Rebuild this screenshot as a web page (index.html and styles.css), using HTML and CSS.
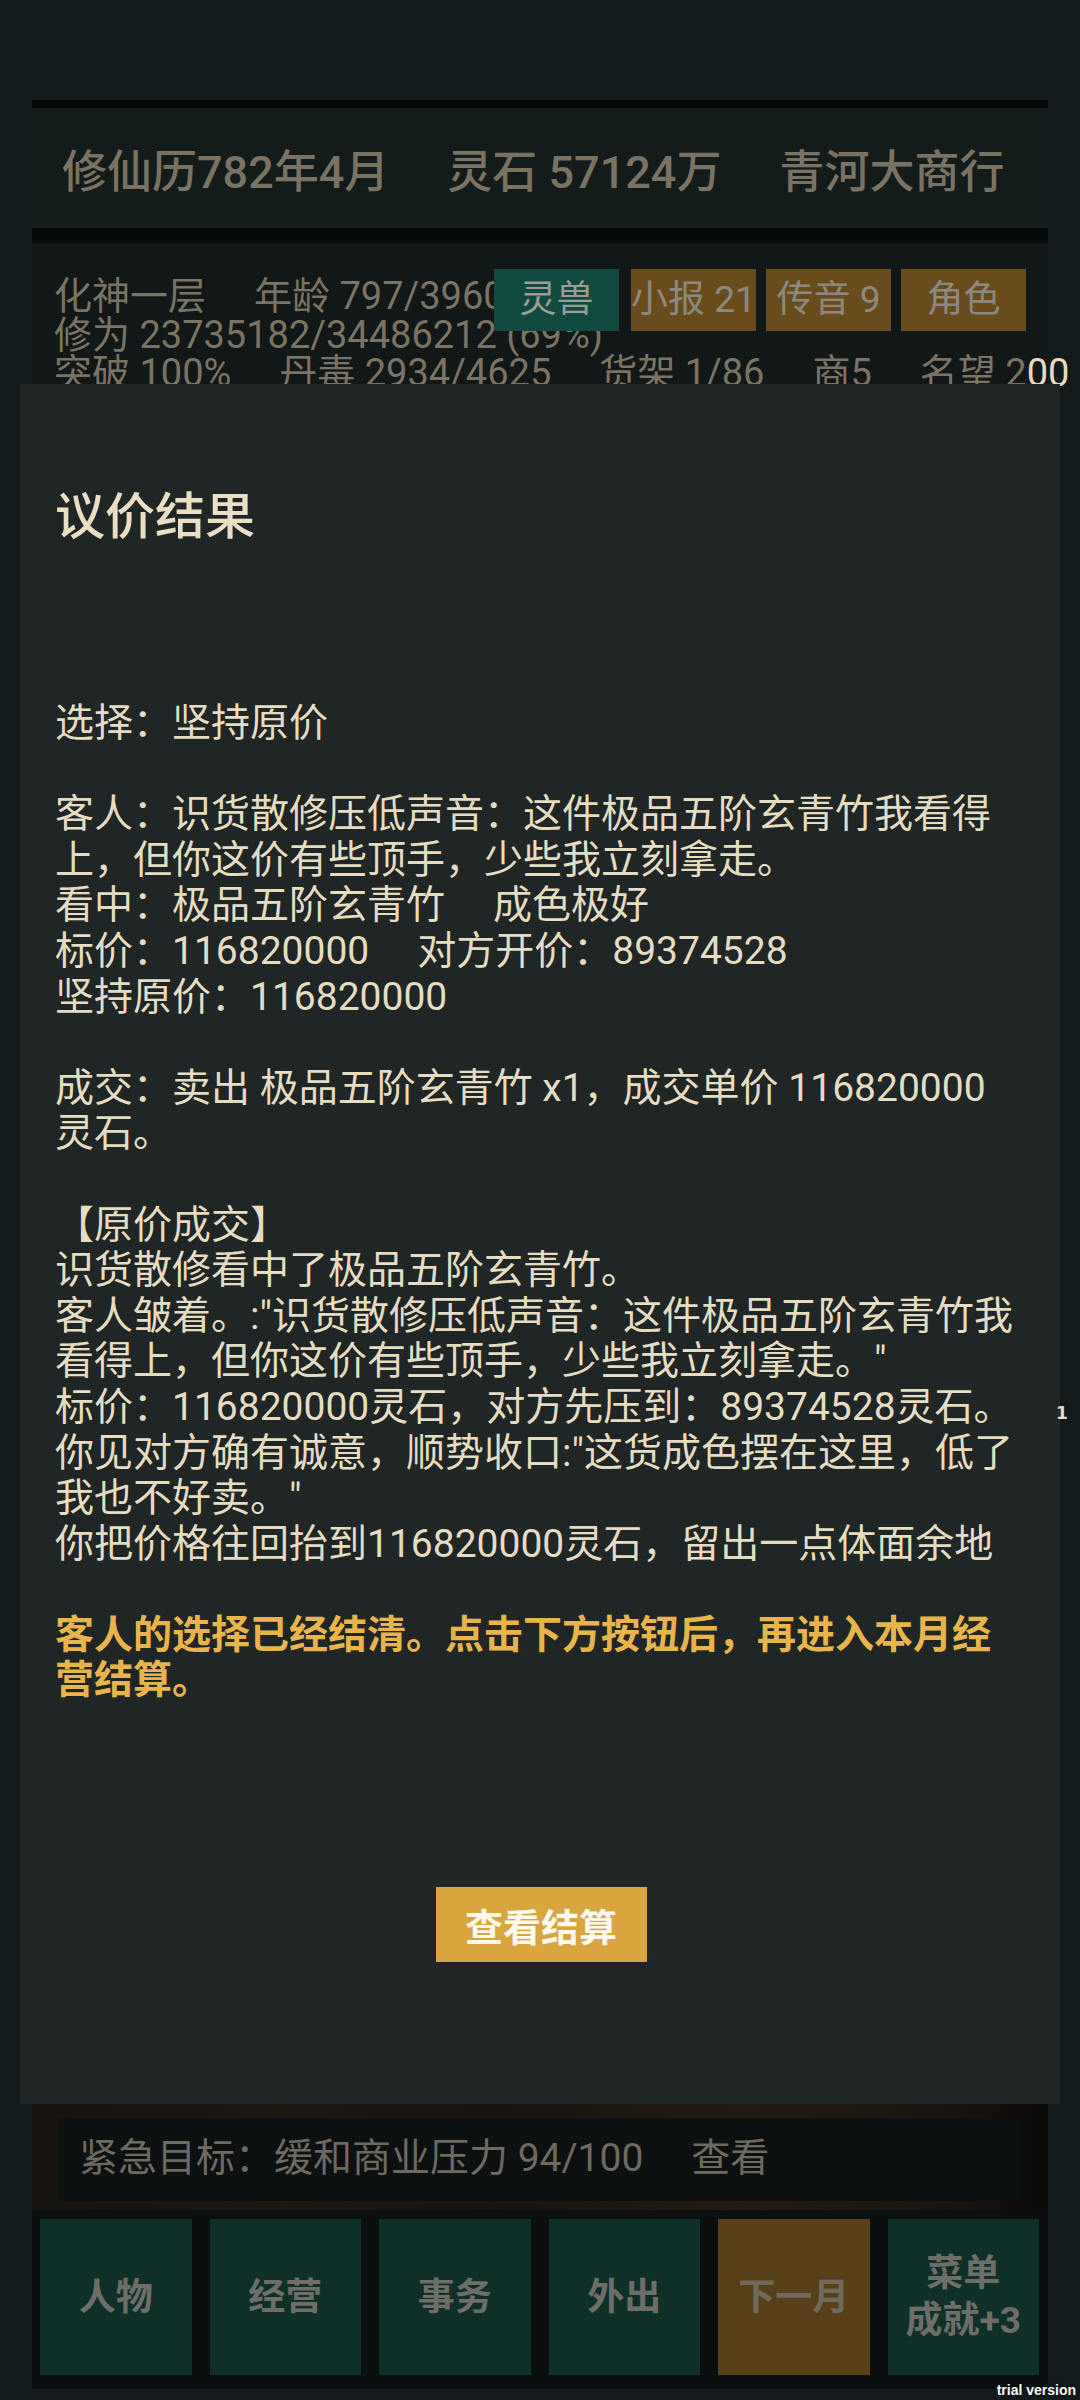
FILE: index.html
```html
<!doctype html>
<html lang="zh">
<head>
<meta charset="utf-8">
<title>议价结果</title>
<link rel="stylesheet" href="styles.css">
</head>
<body>
  <div class="app">
    <div class="topbar">
      <span>修仙历782年4月</span>
      <span>灵石 57124万</span>
      <span>青河大商行</span>
    </div>
    <div class="status">
      <div class="line"><span class="item">化神一层</span><span class="item">年龄 797/3960</span></div>
      <div class="line">修为 23735182/34486212 (69%)</div>
      <div class="line"><span class="item">突破 100%</span><span class="item">丹毒 2934/4625</span><span class="item">货架 1/86</span><span class="item">商5</span><span>名望 2<span class="spill">00</span></span></div>
      <div class="quick">
        <button class="chip chip-pet">灵兽</button>
        <button class="chip">小报 21</button>
        <button class="chip">传音 9</button>
        <button class="chip">角色</button>
      </div>
    </div>
    <div class="scene">
      <div class="goal">紧急目标：缓和商业压力 94/100<span class="goal-link">查看</span></div>
    </div>
    <div class="nav">
      <button class="tab">人物</button>
      <button class="tab">经营</button>
      <button class="tab">事务</button>
      <button class="tab">外出</button>
      <button class="tab tab-next">下一月</button>
      <button class="tab">菜单<br>成就+3</button>
    </div>
  </div>

  <div class="modal">
    <h1 class="modal-title">议价结果</h1>
    <p class="modal-body">选择：坚持原价<br>
<br>
客人：识货散修压低声音：这件极品五阶玄青竹我看得<br>
上，但你这价有些顶手，少些我立刻拿走。<br>
看中：极品五阶玄青竹<span class="sp"></span>成色极好<br>
标价：116820000<span class="sp"></span>对方开价：89374528<br>
坚持原价：116820000<br>
<br>
成交：卖出 极品五阶玄青竹 x1，成交单价 116820000<br>
灵石。<br>
<br>
【原价成交】<br>
识货散修看中了极品五阶玄青竹。<br>
客人皱着。:"识货散修压低声音：这件极品五阶玄青竹我<br>
看得上，但你这价有些顶手，少些我立刻拿走。"<br>
标价：116820000灵石，对方先压到：89374528灵石。<br>
你见对方确有诚意，顺势收口:"这货成色摆在这里，低了<br>
我也不好卖。"<br>
你把价格往回抬到116820000灵石，留出一点体面余地<br>
<br>
<strong class="note">客人的选择已经结清。点击下方按钮后，再进入本月经<br>
营结算。</strong></p>
    <button class="settle">查看结算</button>
  </div>

  <span class="stray">1</span>
  <span class="watermark">trial version</span>
</body>
</html>
```

FILE: styles.css
```css
html, body {
  margin: 0;
  padding: 0;
  overflow: hidden;
}

body {
  width: 1080px;
  height: 2400px;
  background: #131a1b;
  font-family: Roboto, "Noto Sans CJK SC", sans-serif;
  position: relative;
}

button {
  font-family: inherit;
  border: 0;
  padding: 0;
  margin: 0;
}

.app {
  margin-left: 32px;
  width: 1016px;
  padding-top: 100px;
}

/* top info bar */
.topbar {
  display: flex;
  align-items: center;
  gap: 58px;
  height: 120px;
  padding-left: 30px;
  border-top: 8px solid #050708;
  border-bottom: 15px solid #070a0b;
  background: #141b1b;
  font-size: 45px;
  font-weight: 500;
  color: #7a7263;
  white-space: nowrap;
}

/* character status panel */
.status {
  position: relative;
  height: 1827px;
  padding: 34px 0 0 22px;
  background: #121718;
  font-size: 38px;
  line-height: 38.5px;
  color: #7b7363;
  white-space: nowrap;
}

.item {
  margin-right: 48px;
}

.spill {
  color: #e6dcc2;
}

.quick {
  position: absolute;
  top: 26px;
  left: 462px;
  display: flex;
  gap: 10px;
}

.chip {
  width: 125px;
  height: 62px;
  background: #6a4c1c;
  color: #8c8a80;
  font-size: 37px;
  line-height: 62px;
  text-align: center;
  white-space: nowrap;
}

.chip-pet {
  background: #114a40;
  color: #9c9d94;
  margin-right: 2px;
}

/* scene strip with the urgent goal */
.scene {
  height: 106px;
  padding-top: 14px;
  box-sizing: border-box;
  background: linear-gradient(90deg, #15120f 0%, #1d1712 25%, #17130f 45%, #231a12 70%, #1a1510 88%, #0d0b0a 100%);
}

.goal {
  margin-left: 26px;
  width: 963px;
  height: 83px;
  padding: 0 0 12px 21px;
  box-sizing: border-box;
  display: flex;
  align-items: center;
  background: #0c1011;
  font-size: 39px;
  color: #6e6a5f;
  white-space: nowrap;
}

.goal-link {
  margin-left: 48px;
}

/* bottom nav */
.nav {
  display: grid;
  grid-template-columns: repeat(6, 1fr);
  gap: 18px;
  height: 179px;
  padding: 9px 9px 14px 8px;
  box-sizing: border-box;
  background: #0b0f0f;
}

.tab {
  background: #0f3029;
  color: #6d6e68;
  font-size: 37px;
  font-weight: 700;
  line-height: 47px;
  text-align: center;
}

.tab-next {
  background: #5a4019;
  color: #6f6a5c;
}

/* result dialog */
.modal {
  position: absolute;
  top: 384px;
  left: 20px;
  width: 1040px;
  height: 1720px;
  padding: 103px 33px 0 35px;
  box-sizing: border-box;
  background: #1f2625;
  color: #e6dcc2;
}

.modal-title {
  margin: 0;
  font-size: 50px;
  line-height: 60px;
  font-weight: 500;
  color: #eadfc4;
}

.modal-body {
  margin: 154px 0 0 0;
  font-size: 39px;
  line-height: 45.6px;
  white-space: nowrap;
}

.sp {
  display: inline-block;
  width: 48px;
}

.note {
  color: #e9b54a;
  font-weight: 700;
}

.settle {
  display: block;
  margin: 183px auto 0 auto;
  width: 211px;
  height: 75px;
  background: #d9a53f;
  color: #fff8ec;
  font-size: 38px;
  font-weight: 700;
}

.stray {
  position: absolute;
  left: 1056px;
  top: 1403px;
  font-family: "DejaVu Sans", sans-serif;
  font-size: 17px;
  font-weight: 700;
  color: #e6dcc2;
}

.watermark {
  position: absolute;
  right: 4px;
  bottom: 2px;
  font-family: "Liberation Sans", sans-serif;
  font-size: 14px;
  font-weight: 700;
  color: #ffffff;
  text-shadow: 0 0 2px #000;
}
```
